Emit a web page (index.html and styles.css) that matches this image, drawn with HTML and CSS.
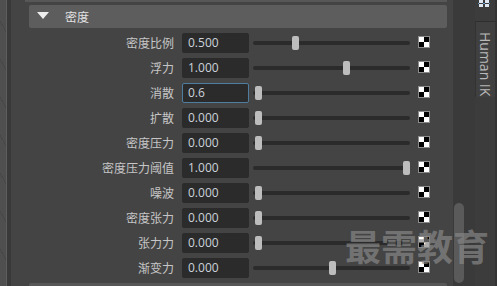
FILE: index.html
```html
<!DOCTYPE html>
<html>
<head>
  <title>Attribute Editor - Density</title>
  <link rel="stylesheet" href="styles.css">
</head>
<body>
<div class="app">
  <div class="viewport"></div>
  <div class="splitter"></div>
  <div class="editor">
    <div class="prev-frame"></div>
    <div class="frame">
      <div class="frame-header">
        <span class="arrow"></span>
        <span class="frame-title">密度</span>
      </div>
      <div class="rows">
        <div class="row">
          <div class="attr-label">密度比例</div>
          <div class="field">0.500</div>
          <div class="slider"><div class="track"></div><div class="thumb" style="left:39px"></div></div>
          <span class="map-btn"><i></i><i></i><i></i><i></i></span>
        </div>
        <div class="row">
          <div class="attr-label">浮力</div>
          <div class="field">1.000</div>
          <div class="slider"><div class="track"></div><div class="thumb" style="left:90px"></div></div>
          <span class="map-btn"><i></i><i></i><i></i><i></i></span>
        </div>
        <div class="row">
          <div class="attr-label">消散</div>
          <div class="field focused">0.6</div>
          <div class="slider"><div class="track"></div><div class="thumb" style="left:2px"></div></div>
          <span class="map-btn"><i></i><i></i><i></i><i></i></span>
        </div>
        <div class="row">
          <div class="attr-label">扩散</div>
          <div class="field">0.000</div>
          <div class="slider"><div class="track"></div><div class="thumb" style="left:2px"></div></div>
          <span class="map-btn"><i></i><i></i><i></i><i></i></span>
        </div>
        <div class="row">
          <div class="attr-label">密度压力</div>
          <div class="field">0.000</div>
          <div class="slider"><div class="track"></div><div class="thumb" style="left:2px"></div></div>
          <span class="map-btn"><i></i><i></i><i></i><i></i></span>
        </div>
        <div class="row">
          <div class="attr-label">密度压力阈值</div>
          <div class="field">1.000</div>
          <div class="slider"><div class="track"></div><div class="thumb" style="left:150px"></div></div>
          <span class="map-btn"><i></i><i></i><i></i><i></i></span>
        </div>
        <div class="row">
          <div class="attr-label">噪波</div>
          <div class="field">0.000</div>
          <div class="slider"><div class="track"></div><div class="thumb" style="left:2px"></div></div>
          <span class="map-btn"><i></i><i></i><i></i><i></i></span>
        </div>
        <div class="row">
          <div class="attr-label">密度张力</div>
          <div class="field">0.000</div>
          <div class="slider"><div class="track"></div><div class="thumb" style="left:2px"></div></div>
          <span class="map-btn"><i></i><i></i><i></i><i></i></span>
        </div>
        <div class="row">
          <div class="attr-label">张力力</div>
          <div class="field">0.000</div>
          <div class="slider"><div class="track"></div><div class="thumb" style="left:2px"></div></div>
          <span class="map-btn"><i></i><i></i><i></i><i></i></span>
        </div>
        <div class="row">
          <div class="attr-label">渐变力</div>
          <div class="field">0.000</div>
          <div class="slider"><div class="track"></div><div class="thumb" style="left:76px"></div></div>
          <span class="map-btn"><i></i><i></i><i></i><i></i></span>
        </div>
      </div>
      <div class="next-frame"></div>
    </div>
  </div>
  <div class="scrollbar"><div class="scroll-thumb"></div></div>
  <div class="side-tabs">
    <svg class="tab-icon" width="13" height="8" viewBox="0 0 13 8">
      <rect x="1" y="0" width="4" height="3" fill="#dfe8f2"/>
      <rect x="7" y="0" width="4" height="3" fill="#dfe8f2"/>
      <rect x="1" y="4" width="4" height="3" fill="#dfe8f2"/>
      <rect x="7" y="4" width="4" height="3" fill="#dfe8f2"/>
      <rect x="5" y="3" width="2" height="1" fill="#5b9bd5"/>
      <rect x="0" y="3" width="1" height="1" fill="#5b9bd5"/>
      <rect x="11" y="3" width="1" height="1" fill="#5b9bd5"/>
    </svg>
    <div class="tab">Human IK</div>
  </div>
  <div class="watermark">最需教育</div>
</div>
</body>
</html>
```

FILE: styles.css
```css
    html, body {
      margin: 0;
      padding: 0;
      background: #444444;
    }
    body {
      font-family: "Open Sans", "Noto Sans CJK SC", sans-serif;
      font-size: 12px;
      overflow: hidden;
    }
    .app {
      display: flex;
      position: relative;
      width: 497px;
      height: 286px;
      overflow: hidden;
    }
    .viewport {
      width: 6px;
      border-right: 1px solid #5e5e5e;
      background: #4f4f4f repeating-linear-gradient(60deg, transparent 0 18px, #474747 18px 19px);
    }
    .splitter {
      width: 4px;
      background: #393939;
    }
    .editor {
      width: 428px;
      padding: 0 0 0 14px;
      background: #444444;
    }
    .prev-frame {
      height: 2px;
      background: #575757;
      margin-right: 6px;
    }
    .frame {
      margin: 3px 6px 0 4px;
    }
    .frame-header {
      display: flex;
      align-items: center;
      height: 23px;
      background: #5d5d5d;
      border-radius: 2px;
    }
    .arrow {
      width: 0;
      height: 0;
      margin: -2px 0 0 8px;
      border-left: 6.5px solid transparent;
      border-right: 6.5px solid transparent;
      border-top: 7px solid #eeeeee;
    }
    .frame-title {
      margin-left: 16px;
      color: #e2e2e2;
      font-family: "Noto Sans CJK SC", sans-serif;
      font-size: 12px;
    }
    .rows {
      margin-top: 3px;
    }
    .row {
      display: flex;
      align-items: flex-start;
      height: 25px;
    }
    .attr-label {
      width: 145px;
      margin-top: 2px;
      line-height: 20px;
      text-align: right;
      color: #c6c6c6;
      font-family: "Noto Sans CJK SC", sans-serif;
      white-space: nowrap;
    }
    .field {
      box-sizing: border-box;
      width: 67px;
      height: 20px;
      margin: 2px 0 0 8px;
      padding-left: 5px;
      line-height: 18px;
      border: 1px solid #2b2b2b;
      border-radius: 2px;
      background: #2b2b2b;
      color: #cbd3db;
    }
    .field.focused {
      border-color: #4f7d9f;
    }
    .slider {
      position: relative;
      display: flex;
      align-items: center;
      width: 157px;
      height: 20px;
      margin: 2px 0 0 4px;
    }
    .track {
      width: 100%;
      height: 4px;
      border-radius: 2px;
      background: #2b2b2b;
    }
    .thumb {
      position: absolute;
      top: 3px;
      width: 7px;
      height: 14px;
      border-radius: 2px;
      background: #bdbdbd;
    }
    .map-btn {
      display: grid;
      grid-template-columns: 5px 5px;
      grid-template-rows: 5px 5px;
      margin: 5px 0 0 8px;
      border: 1px solid #8c8c8c;
    }
    .map-btn i:nth-child(1), .map-btn i:nth-child(4) {
      background: #ffffff;
    }
    .map-btn i:nth-child(2), .map-btn i:nth-child(3) {
      background: #000000;
    }
    .next-frame {
      height: 6px;
      margin-top: 2px;
      background: #575757;
      border-radius: 2px 2px 0 0;
    }
    .scrollbar {
      width: 22px;
      background: #3a3a3a;
    }
    .scroll-thumb {
      width: 10px;
      height: 80px;
      margin: 203px 0 0 1px;
      border-radius: 5px;
      background: #5a5a5a;
    }
    .side-tabs {
      width: 22px;
      background: #3c3c3c;
      border-right: 2px solid #333333;
      box-sizing: border-box;
    }
    .tab-icon {
      display: block;
      margin-left: 3px;
    }
    .tab {
      height: 76px;
      margin-top: 13px;
      padding-top: 10px;
      box-sizing: border-box;
      border-top: 1px solid #2f2f2f;
      border-left: 1px solid #333333;
      background: #404040;
      color: #b8b8b8;
      writing-mode: vertical-rl;
      font-family: "Open Sans", sans-serif;
      font-size: 14px;
      line-height: 19px;
    }
    .watermark {
      position: absolute;
      left: 345px;
      top: 226px;
      color: rgba(135, 135, 135, 0.7);
      font-family: "Noto Sans CJK SC", sans-serif;
      font-weight: 700;
      font-size: 36px;
      line-height: 38px;
      white-space: nowrap;
    }
```
